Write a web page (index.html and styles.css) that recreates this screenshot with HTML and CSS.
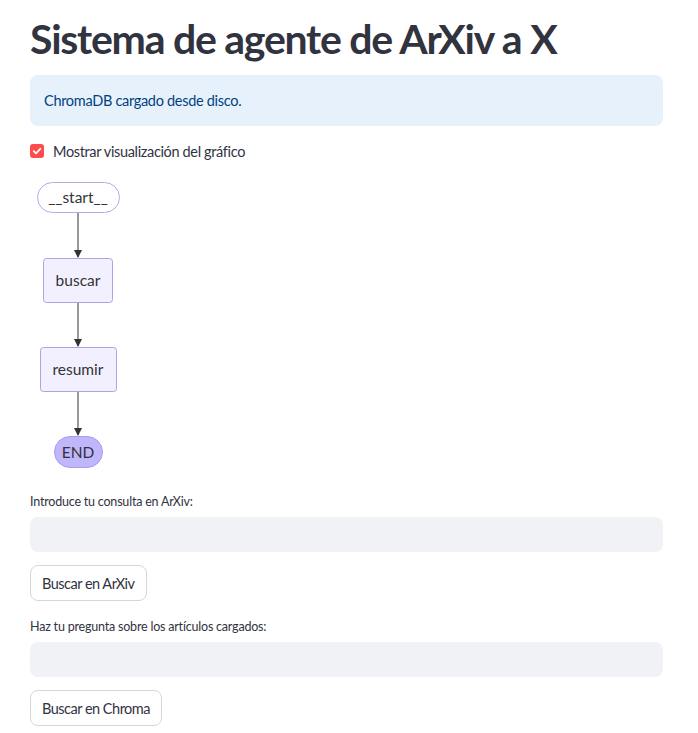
FILE: index.html
```html
<!DOCTYPE html>
<html lang="es">
<head>
<meta charset="utf-8">
<link rel="stylesheet" href="styles.css">
</head>
<body>
<main class="main">
  <h1 class="title">Sistema de agente de ArXiv a X</h1>
  <div class="info">ChromaDB cargado desde disco.</div>
  <label class="check">
    <span class="box"><svg width="10" height="10" viewBox="0 0 10 10"><path d="M1.8 5.2 L4 7.3 L8.3 2.8" fill="none" stroke="#fff" stroke-width="1.8" stroke-linecap="round" stroke-linejoin="round"/></svg></span>
    <span class="check-label">Mostrar visualización del gráfico</span>
  </label>
  <div class="graph">
    <svg width="120" height="300" viewBox="0 0 120 300">
      <g transform="translate(-30,-178)">
        <line x1="78" y1="213" x2="78" y2="258" stroke="#555" stroke-width="1.2"/>
        <path d="M74 251 L82 251 L78 259 Z" fill="#333"/>
        <line x1="78" y1="303" x2="78" y2="347" stroke="#555" stroke-width="1.2"/>
        <path d="M74 340 L82 340 L78 348 Z" fill="#333"/>
        <line x1="78" y1="392" x2="78" y2="436" stroke="#555" stroke-width="1.2"/>
        <path d="M74 429 L82 429 L78 437 Z" fill="#333"/>
        <rect x="37.5" y="183.5" width="82" height="30" rx="15" fill="#fff" stroke="#b7a8e8" stroke-width="1"/>
        <text x="78" y="204" class="node-text">__start__</text>
        <rect x="43.5" y="259.5" width="69" height="44" rx="3" fill="#f2f0ff" stroke="#b0a0ea" stroke-width="1"/>
        <text x="78" y="286.5" class="node-text">buscar</text>
        <rect x="40.5" y="348.5" width="76" height="44" rx="3" fill="#f2f0ff" stroke="#b0a0ea" stroke-width="1"/>
        <text x="78" y="375.5" class="node-text">resumir</text>
        <rect x="54.5" y="437.5" width="48" height="31" rx="15.5" fill="#bfb6fc" stroke="#a99cf0" stroke-width="1"/>
        <text x="78" y="458.5" class="node-text">END</text>
      </g>
    </svg>
  </div>
  <div class="field">
    <div class="field-label">Introduce tu consulta en ArXiv:</div>
    <div class="input"></div>
  </div>
  <button class="btn">Buscar en ArXiv</button>
  <div class="field">
    <div class="field-label">Haz tu pregunta sobre los artículos cargados:</div>
    <div class="input"></div>
  </div>
  <button class="btn">Buscar en Chroma</button>
</main>
</body>
</html>
```
FILE: styles.css
```css
html, body {
  margin: 0;
  padding: 0;
  background: #fff;
}
body {
  font-family: Lato, "Noto Sans", sans-serif;
  color: #31333f;
}
.main {
  width: 633px;
  padding: 0 0 0 30px;
  display: flex;
  flex-direction: column;
  align-items: flex-start;
}
.title {
  margin: 15px 0 0 0;
  font-size: 41px;
  line-height: 48px;
  font-weight: 700;
  color: #31333f;
  letter-spacing: -1.25px;
}
.info {
  margin-top: 12px;
  box-sizing: border-box;
  width: 633px;
  height: 51px;
  padding: 0 14px;
  display: flex;
  align-items: center;
  background: #e7f1fc;
  border-radius: 8px;
  color: #004280;
  font-size: 14.5px;
  letter-spacing: -0.3px;
}
.check {
  margin-top: 17px;
  display: flex;
  align-items: center;
  gap: 9px;
  font-size: 14.5px;
  letter-spacing: -0.35px;
  height: 16px;
}
.box {
  width: 14px;
  height: 14px;
  border-radius: 3px;
  background: #ff4b4b;
  display: flex;
  align-items: center;
  justify-content: center;
}
.graph {
  margin-top: 18px;
  height: 315px;
}
.graph svg { display: block; }
.node-text {
  font-family: Lato, "Noto Sans", sans-serif;
  font-size: 15.5px;
  fill: #333;
  text-anchor: middle;
}
.field {
  display: flex;
  flex-direction: column;
  width: 633px;
}
.field-label {
  font-size: 12.5px;
  letter-spacing: -0.2px;
  line-height: 16px;
  margin-top: 2px;
}
.input {
  margin-top: 7px;
  height: 35px;
  background: #f0f2f6;
  border-radius: 8px;
}
.btn {
  margin-top: 13px;
  margin-bottom: 16px;
  height: 36px;
  padding: 0 11px;
  background: #fff;
  border: 1px solid #d6d6d9;
  border-radius: 8px;
  font-family: Lato, "Noto Sans", sans-serif;
  font-size: 14.5px;
  letter-spacing: -0.5px;
  color: #31333f;
}
```
